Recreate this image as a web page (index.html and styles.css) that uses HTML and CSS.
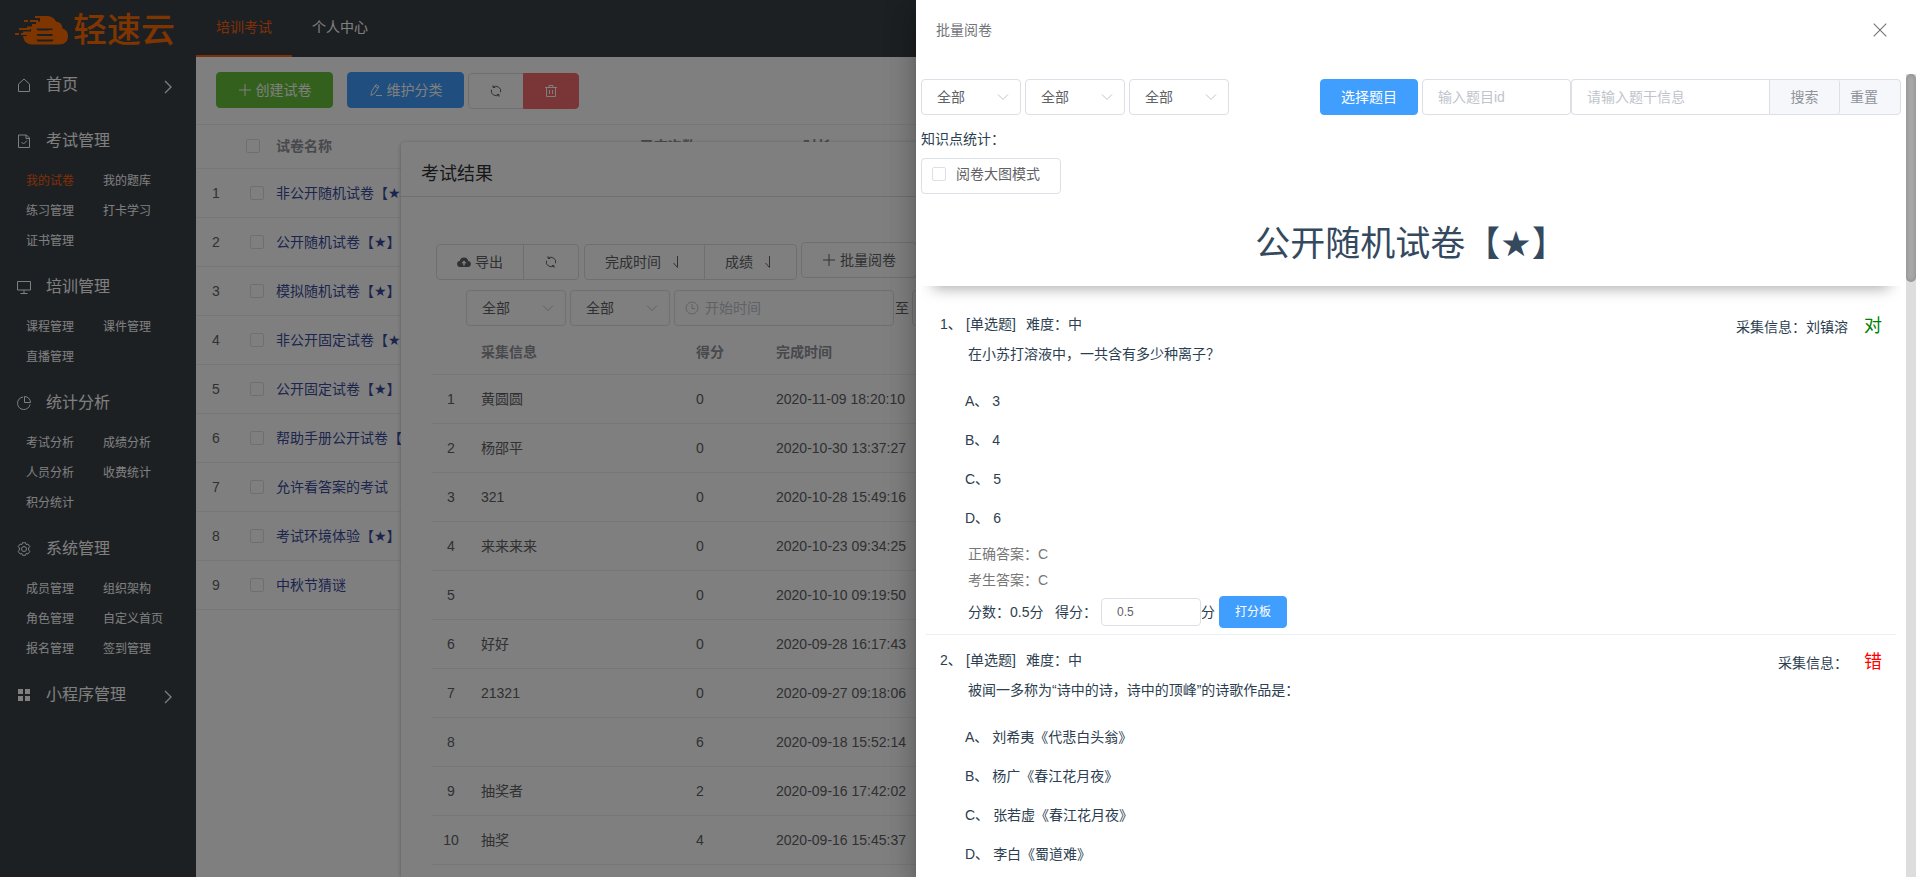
FILE: index.html
```html
<!DOCTYPE html>
<html lang="zh-CN">
<head>
<meta charset="utf-8">
<title>轻速云</title>
<link rel="stylesheet" href="styles.css">
</head>
<body>
<svg width="0" height="0" class="defs" aria-hidden="true">
  <symbol id="i-plus" viewBox="0 0 14 14"><path d="M7 1v12M1 7h12"/></symbol>
  <symbol id="i-edit" viewBox="0 0 14 14"><path d="M2 12.500 2.500 8.500 7 1.500 10 3.500 5.500 10.500zM6 3.200l3 2M7 12.500h6"/></symbol>
  <symbol id="i-refresh" viewBox="0 0 14 14"><path d="M4 3.300A4.800 4.800 0 0 1 11.600 8.300M10 10.700A4.800 4.800 0 0 1 2.400 5.700M4 1.300v2.200h2.200M10 12.700v-2.200H7.800"/></symbol>
  <symbol id="i-trash" viewBox="0 0 14 14"><path d="M1 3.500h12M5 3.500v-2h4v2M2.500 3.500v9h9v-9M5.500 6v4M8.500 6v4"/></symbol>
  <symbol id="i-down" viewBox="0 0 14 14"><path d="m2 4.500 5 5 5-5"/></symbol>
  <symbol id="i-right" viewBox="0 0 14 14"><path stroke-width="1.300" d="m3 1 6 6-6 6"/></symbol>
  <symbol id="i-sort" viewBox="0 0 14 14"><path d="M7.500 1v11.500L3.500 8"/></symbol>
  <symbol id="i-clock" viewBox="0 0 14 14"><circle cx="7" cy="7" r="6"/><path d="M7 3v4.500h3"/></symbol>
  <symbol id="i-close" viewBox="0 0 14 14"><path d="m1.500 1.500 11 11M12.500 1.500l-11 11"/></symbol>
  <symbol id="i-cloud" viewBox="0 0 14 14"><path fill="currentColor" stroke="none" fill-rule="evenodd" d="M3.500 12A3 3 0 0 1 2.800 6 4.300 4.300 0 0 1 11.200 6 3 3 0 0 1 10.500 12zM7 5.500 4.300 8.300h1.900V10.500h1.600V8.300h1.900z"/></symbol>
</svg>
<div class="app">
  <aside class="side">
    <a class="logo" href="#" aria-label="轻速云">
      <svg viewBox="0 0 54 30" width="54" height="30" aria-hidden="true">
        <path fill="#ff6a00" fill-rule="evenodd" d="M20 1h12q6 0 9 5.500 6 .5 6.500 7Q53 15 53 21q0 8.500-9 8.500H17q-8 0-9-8.500h4v-2H8v-2.500h8V14H12v-2.500h5V9h4V6.500h4V3h-5zM21.500 13.500q0 2 2 2h14v-2zM21.500 19q0 2 2 2h14v-2zM21.500 24.500q0 2 2 2h13q2 0 2-2z"/>
        <path fill="#ff6a00" d="M9 5h4v2H9zM15 5h8v2h-8zM4 13h11v2H4zM0 18h4v2H0zM6 18h6v2H6zM34 15h4v4h-4z"/>
      </svg>
      <span>轻速云</span>
    </a>
    <nav class="menu">
      <section><a class="head" href="#"><svg class="mi" viewBox="0 0 14 14"><path d="M1.500 6 7 1l5.500 5v7.500h-11z"/></svg>首页<svg class="arr"><use href="#i-right"/></svg></a></section>
      <section><a class="head" href="#"><svg class="mi" viewBox="0 0 14 14"><path d="M1.500 1h8l3 3v9.500h-11zM9 1v3.500h3.500M4.500 8l2 2 3.500-3.500"/></svg>考试管理</a>
        <div class="subs"><a class="on" href="#">我的试卷</a><a href="#">我的题库</a><a href="#">练习管理</a><a href="#">打卡学习</a><a href="#">证书管理</a></div></section>
      <section><a class="head" href="#"><svg class="mi" viewBox="0 0 14 14"><path d="M.5 1.500h13v8.500H.5zM7 10v3M3.500 13.500h7"/></svg>培训管理</a>
        <div class="subs"><a href="#">课程管理</a><a href="#">课件管理</a><a href="#">直播管理</a></div></section>
      <section><a class="head" href="#"><svg class="mi" viewBox="0 0 14 14"><path d="M6 1A6.300 6.300 0 1 0 13 8.500M7.500.5v6h6A6 6 0 0 0 7.500.5z"/></svg>统计分析</a>
        <div class="subs"><a href="#">考试分析</a><a href="#">成绩分析</a><a href="#">人员分析</a><a href="#">收费统计</a><a href="#">积分统计</a></div></section>
      <section><a class="head" href="#"><svg class="mi" viewBox="0 0 14 14"><path d="M5.500.7h3l.6 1.800 1.900-.4 1.800 2.500L11.600 6v2l1.200 1.400-1.800 2.500-1.900-.4-.6 1.800h-3l-.6-1.800-1.900.4-1.800-2.500L2.400 8V6L1.200 4.600 3 2.100l1.900.4z"/><circle cx="7" cy="7" r="2.500"/></svg>系统管理</a>
        <div class="subs"><a href="#">成员管理</a><a href="#">组织架构</a><a href="#">角色管理</a><a href="#">自定义首页</a><a href="#">报名管理</a><a href="#">签到管理</a></div></section>
      <section><a class="head" href="#"><svg class="mi" viewBox="0 0 14 14"><path fill="currentColor" stroke="none" d="M1 1h5v5H1zM8 1h5v5H8zM1 8h5v5H1zM8 8h5v5H8z"/></svg>小程序管理<svg class="arr"><use href="#i-right"/></svg></a></section>
    </nav>
  </aside>
  <main class="main">
    <header class="top"><a class="on" href="#">培训考试</a><a href="#">个人中心</a></header>
    <div class="tools">
      <button class="btn green"><svg><use href="#i-plus"/></svg>创建试卷</button>
      <button class="btn blue"><svg><use href="#i-edit"/></svg>维护分类</button>
      <span class="group"><button class="btn" aria-label="刷新"><svg><use href="#i-refresh"/></svg></button><button class="btn red" aria-label="删除"><svg><use href="#i-trash"/></svg></button></span>
    </div>
    <table class="grid papers">
      <colgroup><col class="c-no"><col class="c-ck"><col class="c-name"><col class="c-num"><col></colgroup>
      <thead><tr><th></th><th><input type="checkbox" aria-label="全选"></th><th>试卷名称</th><th>已交次数</th><th>时长</th></tr></thead>
      <tbody>
        <tr><td>1</td><td><input type="checkbox" aria-label="1"></td><td><a href="#">非公开随机试卷【<i>★</i>】</a></td><td></td><td></td></tr>
        <tr><td>2</td><td><input type="checkbox" aria-label="2"></td><td><a href="#">公开随机试卷【<i>★</i>】</a></td><td></td><td></td></tr>
        <tr><td>3</td><td><input type="checkbox" aria-label="3"></td><td><a href="#">模拟随机试卷【<i>★</i>】</a></td><td></td><td></td></tr>
        <tr><td>4</td><td><input type="checkbox" aria-label="4"></td><td><a href="#">非公开固定试卷【<i>★</i>】</a></td><td></td><td></td></tr>
        <tr><td>5</td><td><input type="checkbox" aria-label="5"></td><td><a href="#">公开固定试卷【<i>★</i>】</a></td><td></td><td></td></tr>
        <tr><td>6</td><td><input type="checkbox" aria-label="6"></td><td><a href="#">帮助手册公开试卷【<i>★</i>】</a></td><td></td><td></td></tr>
        <tr><td>7</td><td><input type="checkbox" aria-label="7"></td><td><a href="#">允许看答案的考试</a></td><td></td><td></td></tr>
        <tr><td>8</td><td><input type="checkbox" aria-label="8"></td><td><a href="#">考试环境体验【<i>★</i>】</a></td><td></td><td></td></tr>
        <tr><td>9</td><td><input type="checkbox" aria-label="9"></td><td><a href="#">中秋节猜谜</a></td><td></td><td></td></tr>
      </tbody>
    </table>
  </main>
</div>

<section class="dialog">
  <h2>考试结果</h2>
  <div class="dbody">
    <div class="drow">
      <span class="group low"><button class="btn"><svg><use href="#i-cloud"/></svg>导出</button><button class="btn" aria-label="刷新"><svg><use href="#i-refresh"/></svg></button></span>
      <span class="group low"><button class="btn sort">完成时间<svg><use href="#i-sort"/></svg></button><button class="btn sort">成绩<svg><use href="#i-sort"/></svg></button></span>
      <button class="btn"><svg><use href="#i-plus"/></svg>批量阅卷</button>
    </div>
    <div class="drow filters">
      <label class="sel"><select aria-label="状态"><option>全部</option></select><svg><use href="#i-down"/></svg></label>
      <label class="sel"><select aria-label="阅卷"><option>全部</option></select><svg><use href="#i-down"/></svg></label>
      <span class="range"><label class="date"><svg><use href="#i-clock"/></svg><input type="text" placeholder="开始时间" aria-label="开始时间"></label>至<label class="date end"><svg><use href="#i-clock"/></svg><input type="text" placeholder="结束时间" aria-label="结束时间"></label></span>
    </div>
    <table class="grid results">
      <colgroup><col class="r-no"><col class="r-name"><col class="r-score"><col></colgroup>
      <thead><tr><th></th><th>采集信息</th><th>得分</th><th>完成时间</th></tr></thead>
      <tbody>
        <tr><td>1</td><td>黄圆圆</td><td>0</td><td>2020-11-09 18:20:10</td></tr>
        <tr><td>2</td><td>杨邵平</td><td>0</td><td>2020-10-30 13:37:27</td></tr>
        <tr><td>3</td><td>321</td><td>0</td><td>2020-10-28 15:49:16</td></tr>
        <tr><td>4</td><td>来来来来</td><td>0</td><td>2020-10-23 09:34:25</td></tr>
        <tr><td>5</td><td></td><td>0</td><td>2020-10-10 09:19:50</td></tr>
        <tr><td>6</td><td>好好</td><td>0</td><td>2020-09-28 16:17:43</td></tr>
        <tr><td>7</td><td>21321</td><td>0</td><td>2020-09-27 09:18:06</td></tr>
        <tr><td>8</td><td></td><td>6</td><td>2020-09-18 15:52:14</td></tr>
        <tr><td>9</td><td>抽奖者</td><td>2</td><td>2020-09-16 17:42:02</td></tr>
        <tr><td>10</td><td>抽奖</td><td>4</td><td>2020-09-16 15:45:37</td></tr>
      </tbody>
    </table>
  </div>
</section>

<div class="mask"></div>

<section class="drawer">
  <header class="dhead"><span>批量阅卷</span><button aria-label="关闭"><svg><use href="#i-close"/></svg></button></header>
  <div class="scroll">
    <div class="dmain">
      <div class="bar">
        <label class="sel"><select aria-label="题型"><option>全部</option></select><svg><use href="#i-down"/></svg></label>
        <label class="sel"><select aria-label="难度"><option>全部</option></select><svg><use href="#i-down"/></svg></label>
        <label class="sel"><select aria-label="结果"><option>全部</option></select><svg><use href="#i-down"/></svg></label>
        <button class="btn blue pick">选择题目</button>
        <div class="search"><input class="qid" type="text" placeholder="输入题目id" aria-label="题目id"><input class="qtext" type="text" placeholder="请输入题干信息" aria-label="题干信息"><span class="append"><button>搜索</button><button>重置</button></span></div>
      </div>
      <p class="stat">知识点统计：</p>
      <label class="mode"><input type="checkbox">阅卷大图模式</label>
      <h1>公开随机试卷【<i>★</i>】</h1>
      <article class="q">
        <div class="who">采集信息：刘镇溶<b class="ok">对</b></div>
        <div class="qh"><span>1、</span><span>[单选题]</span><span>难度：中</span></div>
        <p class="stem">在小苏打溶液中，一共含有多少种离子？</p>
        <ul><li>A、<span>3</span></li><li>B、<span>4</span></li><li>C、<span>5</span></li><li>D、<span>6</span></li></ul>
        <p class="ans">正确答案：C</p>
        <p class="ans">考生答案：C</p>
        <div class="score"><span class="full">分数：0.5分</span><label for="s1">得分：</label><input id="s1" type="text" value="0.5">分<button class="btn blue small">打分板</button></div>
      </article>
      <article class="q">
        <div class="who">采集信息：<b class="bad">错</b></div>
        <div class="qh"><span>2、</span><span>[单选题]</span><span>难度：中</span></div>
        <p class="stem">被闻一多称为“诗中的诗，诗中的顶峰”的诗歌作品是：</p>
        <ul><li>A、<span>刘希夷《代悲白头翁》</span></li><li>B、<span>杨广《春江花月夜》</span></li><li>C、<span>张若虚《春江花月夜》</span></li><li>D、<span>李白《蜀道难》</span></li></ul>
      </article>
    </div>
    <div class="track"><div class="thumb"></div></div>
  </div>
</section>
</body>
</html>
```
FILE: styles.css
```css
* { box-sizing: border-box; }
html, body { height: 100%; }
body {
  margin: 0;
  overflow: hidden;
  background: #fff;
  color: #606266;
  font: 14px/20px "Liberation Sans", "Noto Sans CJK SC", sans-serif;
  text-spacing-trim: space-all;
}
h1, h2, p, ul { margin: 0; padding: 0; font-weight: 400; }
li { list-style: none; }
a { color: inherit; text-decoration: none; }
i { font-family: "DejaVu Sans", sans-serif; font-style: normal; }
button, input, select { font: inherit; color: inherit; }
svg { width: 14px; height: 14px; fill: none; stroke: currentColor; stroke-width: 1; flex: none; }
.defs { position: absolute; width: 0; height: 0; }
input[type="checkbox"] {
  appearance: none; display: block; width: 14px; height: 14px; margin: 0;
  border: 1px solid #dcdfe6; border-radius: 2px; background: #fff;
}
input::placeholder { color: #c0c4cc; opacity: 1; }

.app { display: flex; height: 100%; }
.side { flex: none; width: 196px; background: #384045; color: #fff; }
.logo { display: flex; align-items: center; gap: 4px; height: 60px; padding-left: 15px; color: #ff6a00; }
.logo svg { width: 54px; height: 30px; stroke: none; }
.logo span { font-size: 34px; line-height: 40px; font-weight: 500; }
.menu section { margin-bottom: 6px; }
.head { display: flex; align-items: center; height: 50px; padding: 0 20px 0 17px; font-size: 16px; }
.mi { margin-right: 15px; }
.arr { margin: 4px 0 0 auto; }
.subs { display: grid; grid-template-columns: 77px 1fr; padding-left: 26px; font-size: 12px; line-height: 30px; }
.subs .on, .top .on { color: #ff6010; }

.main { flex: 1; min-width: 0; }
.top { display: flex; height: 57px; background: #384045; color: #fff; }
.top a { padding: 0 20px; line-height: 55px; }
.top .on { border-bottom: 2px solid #ff6010; }
.tools { display: flex; align-items: flex-start; height: 67px; padding: 15px 20px 0; }
.btn {
  display: inline-flex; align-items: center; justify-content: center; gap: 4px;
  height: 36px; padding: 0 20px; border: 1px solid #dcdfe6; border-radius: 4px;
  background: #fff; white-space: nowrap;
}
.tools > .btn { margin-right: 14px; width: 117px; }
.tools > .btn.blue { margin-right: 4px; }
.green { background: #67c23a; border-color: #67c23a; color: #fff; }
.blue { background: #409eff; border-color: #409eff; color: #fff; }
.red { background: #f56c6c; border-color: #f56c6c; color: #fff; }
.group { display: inline-flex; }
.group .btn:first-child { border-radius: 4px 0 0 4px; }
.group .btn:last-child { border-radius: 0 4px 4px 0; margin-left: -1px; }
.tools .group { padding-top: 1px; }

.grid { width: 100%; border-collapse: collapse; table-layout: fixed; }
.grid th { height: 44px; padding: 0; text-align: left; font-weight: 600; color: #909399; }
.grid td { height: 49px; padding: 0; white-space: nowrap; }
.grid tr { border-bottom: 1px solid #ebeef5; }
.papers { border-top: 1px solid #ebeef5; }
.papers th { padding-bottom: 2px; }
.c-no { width: 50px; }
.c-ck { width: 30px; }
.c-name { width: 364px; }
.c-num { width: 163px; }
.papers td:first-child { padding-left: 16px; }
.papers td input { margin-left: 4px; }
.papers a { color: #3a4b9c; }

.dialog {
  position: absolute; left: 401px; right: 20px; top: 142px; bottom: 0;
  overflow: hidden; background: #fff; border-radius: 4px 4px 0 0;
  box-shadow: 0 1px 4px rgba(0, 0, 0, .3);
}
.dialog h2 { height: 55px; padding-left: 20px; border-bottom: 1px solid #dcdfe6; font-size: 18px; line-height: 64px; color: #303133; }
.dbody { padding: 45px 30px 0; }
.drow { display: flex; gap: 4px; padding-left: 5px; margin-bottom: 10px; }
.low { padding-top: 2px; }
.low + .low { margin-left: 1px; }
.sort { gap: 9px; }
.filters { padding-left: 35px; margin-bottom: 4px; }
.sel { display: flex; align-items: center; flex: none; width: 100px; height: 36px; padding-right: 10px; border: 1px solid #dcdfe6; border-radius: 4px; background: #fff; }
.sel select { appearance: none; flex: 1; min-width: 0; height: 34px; padding: 0 0 0 15px; border: 0; background: none; outline: 0; }
.sel svg, .date svg { color: #c0c4cc; }
.range { display: flex; align-items: center; gap: 1px; }
.date { display: flex; align-items: center; width: 220px; height: 36px; padding-left: 10px; border: 1px solid #dcdfe6; border-radius: 4px; }
.date input { width: 180px; border: 0; background: none; padding: 0 0 0 6px; }
.end { margin-left: 2px; }
.results .r-no { width: 50px; }
.results .r-name { width: 215px; }
.results .r-score { width: 80px; }
.results td:first-child { padding-right: 10px; text-align: center; }

.mask { position: absolute; inset: 0; background: rgba(0, 0, 0, .5); }

.drawer {
  position: absolute; top: 0; right: 0; bottom: 0; width: 1000px;
  display: flex; flex-direction: column; background: #fff; color: #2c3e50;
  box-shadow: 0 8px 10px -5px rgba(0, 0, 0, .2), 0 16px 24px 2px rgba(0, 0, 0, .14), 0 6px 30px 5px rgba(0, 0, 0, .12);
}
.dhead { display: flex; align-items: center; justify-content: space-between; height: 60px; margin-bottom: 14px; padding: 0 28px 0 20px; color: #72767b; }
.dhead button { display: flex; padding: 0; border: 0; background: none; }
.dhead svg { width: 16px; height: 16px; }
.scroll { display: flex; flex: 1; min-height: 0; overflow: hidden; }
.dmain { flex: 1; padding: 5px 5px 0; }
.track { flex: none; width: 10px; background: #ddd; }
.thumb { height: 208px; border-radius: 5px; background: #a8a8a8; box-shadow: inset 0 0 4px #888; }
.bar { display: flex; gap: 4px; color: #606266; }
.pick { margin-left: auto; }
.search { display: flex; }
.search input { height: 36px; padding: 0 15px; border: 1px solid #dcdfe6; border-radius: 4px; }
.qid { width: 149px; }
.search .qtext { width: 198px; border-right: 0; border-radius: 4px 0 0 4px; }
.append { display: flex; width: 132px; border: 1px solid #dcdfe6; border-radius: 0 4px 4px 0; background: #f5f7fa; color: #909399; }
.append button { padding: 0 10px; border: 0; background: none; }
.append button:first-child { width: 70px; padding: 0 20px; border-right: 1px solid #dcdfe6; border-radius: 0 3px 3px 0; }
.stat { padding: 14px 0 9px; }
.mode { display: inline-flex; gap: 10px; width: 140px; height: 36px; padding: 5px 10px; border: 1px solid #dcdfe6; border-radius: 4px; color: #606266; vertical-align: top; }
.mode input { margin-top: 3px; }
h1 { height: 92px; padding-top: 24px; font-size: 35px; line-height: 52px; text-align: center; color: #34495e; box-shadow: 0 14px 14px -12px rgba(0, 0, 0, .35); clip-path: inset(0 0 -30px 0); }
.q { margin: 0 5px; padding: 28px 0 0 14px; height: 349px; border-bottom: 1px solid #ebeef5; }
.q + .q { padding-top: 15px; }
.qh { display: flex; height: 20px; }
.qh span:nth-child(1) { width: 26px; }
.qh span:nth-child(2) { width: 60px; }
.who { float: right; padding: 2px 14px 0 0; }
.who b { margin-left: 16px; font-size: 18px; font-weight: 400; }
.ok { color: green; }
.bad { color: red; }
.stem { padding: 10px 0 18px 28px; }
.q ul { padding: 0 0 3px 25px; }
.q li { display: flex; line-height: 39px; }
.q li span { margin-left: 4px; }
.ans { padding-left: 28px; line-height: 26px; color: #777; }
.score { display: flex; align-items: center; height: 32px; margin-top: 3px; padding-left: 28px; }
.full { width: 87px; }
.score label { width: 46px; }
.score input { width: 100px; height: 28px; padding: 0 15px; border: 1px solid #dcdfe6; border-radius: 4px; color: #606266; font-size: 12px; }
.small { height: 32px; margin-left: 4px; padding: 0 15px; font-size: 12px; }
```
